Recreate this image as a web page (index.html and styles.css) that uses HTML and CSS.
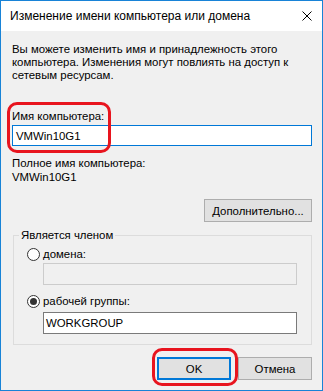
FILE: index.html
```html
<!DOCTYPE html>
<html lang="ru">
<head>
    <meta charset="UTF-8">
    <title>Изменение имени компьютера или домена</title>
    <link rel="stylesheet" href="styles.css">
</head>
<body>
    <div class="window">
        <div class="titlebar">
            <span class="title">Изменение имени компьютера или домена</span>
            <svg class="close" width="10" height="10" viewBox="0 0 10 10">
                <path d="M0.5 0.5 L9.5 9.5 M9.5 0.5 L0.5 9.5" stroke="#000" stroke-width="1" fill="none"/>
            </svg>
        </div>

        <div class="content">
            <p class="intro">Вы можете изменить имя и принадлежность этого<br>компьютера. Изменения могут повлиять на доступ к<br>сетевым ресурсам.</p>

            <div class="field-label">Имя компьютера:</div>
            <div class="textbox name-box focused">VMWin10G1</div>

            <div class="full-label">Полное имя компьютера:</div>
            <div class="full-value">VMWin10G1</div>

            <div class="more-row">
                <button class="btn btn-more">Дополнительно...</button>
            </div>

            <fieldset class="group">
                <legend>Является членом</legend>
                <div class="radio-row first"><span class="radio"></span>домена:</div>
                <div class="textbox group-box disabled"></div>
                <div class="radio-row second"><span class="radio checked"></span>рабочей группы:</div>
                <div class="textbox group-box workgroup">WORKGROUP</div>
            </fieldset>

            <div class="actions">
                <button class="btn btn-default">OK</button>
                <button class="btn">Отмена</button>
            </div>
        </div>

        <!-- red highlight marks -->
        <div class="mark mark-name"></div>
        <div class="mark mark-ok"></div>
    </div>
</body>
</html>
```

FILE: styles.css
```css
* {
    margin: 0;
    padding: 0;
    box-sizing: border-box;
}

body {
    background: #fff;
    font-family: 'Liberation Sans', Arial, sans-serif;
    font-size: 11.4px;
    color: #000;
}

.window {
    position: relative;
    width: 323px;
    height: 391px;
    border: 1px solid #1883d7;
    background: #f0f0f0;
    overflow: hidden;
}

.titlebar {
    height: 30px;
    background: #fff;
    display: flex;
    align-items: center;
    justify-content: space-between;
    padding: 0 10px 0 9px;
}

.title {
    font-size: 12px;
    line-height: 14px;
}

.close {
    display: block;
}

.content {
    padding: 12px 10px 0 11px;
}

.intro {
    line-height: 13px;
}

.field-label {
    margin-top: 28px;
    line-height: 13px;
}

.textbox {
    background: #fff;
    border: 1px solid #7a7a7a;
    display: flex;
    align-items: center;
    line-height: 14px;
}

.name-box {
    margin-top: 2px;
    height: 21px;
    padding-left: 3px;
}

.textbox.focused {
    border-color: #0078d7;
}

.full-label {
    margin-top: 10px;
    line-height: 14px;
}

.full-value {
    line-height: 14px;
}

.more-row {
    display: flex;
    justify-content: flex-end;
    margin-top: 15px;
}

.btn {
    font-family: inherit;
    font-size: 11.4px;
    color: #000;
    background: #e1e1e1;
    border: 1px solid #adadad;
    height: 23px;
    width: 74px;
    padding: 0;
}

.btn-more {
    width: 108px;
}

.btn-default {
    border-color: #0078d7;
    box-shadow: inset 0 0 0 1px #0078d7;
}

.group {
    margin: 6px 0 0 1px;
    border: 1px solid #dcdcdc;
    padding: 0 0 10px 0;
}

.group legend {
    margin-left: 5px;
    padding: 0 2px;
    line-height: 14px;
}

.radio-row {
    display: flex;
    align-items: center;
    line-height: 14px;
    margin-left: 13px;
}

.radio-row.first {
    margin-top: 5px;
}

.radio-row.second {
    margin-top: 9px;
}

.radio {
    width: 13px;
    height: 13px;
    border: 1px solid #333;
    border-radius: 50%;
    background: #fff;
    margin-right: 3px;
    display: flex;
    align-items: center;
    justify-content: center;
}

.radio.checked::after {
    content: '';
    width: 7px;
    height: 7px;
    border-radius: 50%;
    background: #333;
}

.group-box {
    height: 22px;
    margin-left: 29px;
    width: 254px;
    padding-left: 2px;
}

.textbox.disabled {
    margin-top: 2px;
    background: #f0f0f0;
    border-color: #cccccc;
}

.textbox.workgroup {
    margin-top: 4px;
}

.actions {
    display: flex;
    justify-content: flex-end;
    gap: 7px;
    margin-top: 12px;
}

.mark {
    position: absolute;
    border: 3px solid #e8141e;
    border-radius: 10px;
}

.mark-name {
    left: 6px;
    top: 101px;
    width: 104px;
    height: 51px;
}

.mark-ok {
    left: 151px;
    top: 347px;
    width: 86px;
    height: 38px;
}
```
